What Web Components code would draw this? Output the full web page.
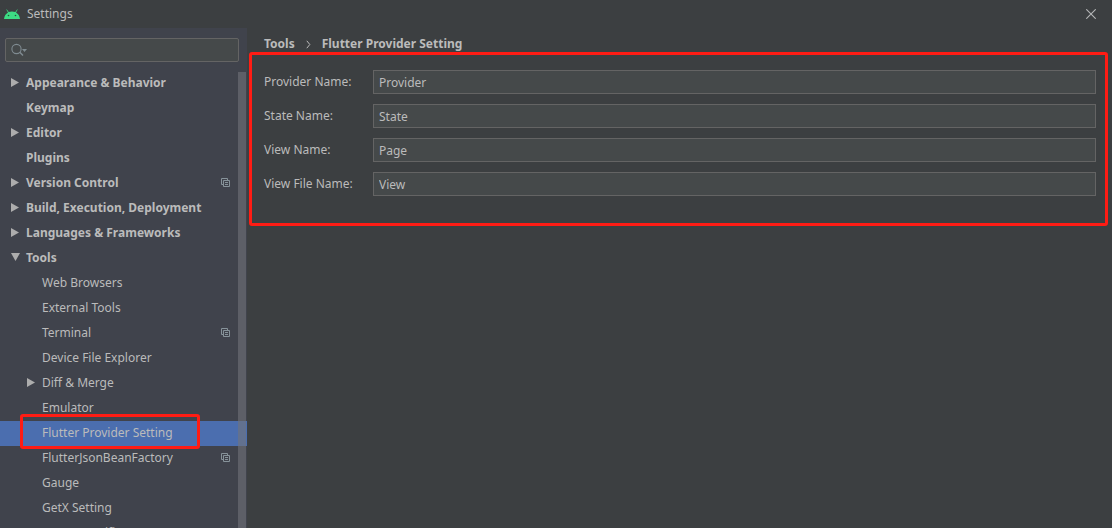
<!DOCTYPE html>
<html lang="en">
<head>
<meta charset="utf-8">
<title>Settings</title>
<style>
html, body { height: 100%; margin: 0; }
body { background: #3c3f41; color: #bbbbbb; font: 12px/24px "Noto Sans", "Open Sans", sans-serif; overflow: hidden; }
</style>
</head>
<body>
<settings-window></settings-window>
<script>
class Base extends HTMLElement {
  connectedCallback() {
    if (this.shadowRoot) return;
    this.attachShadow({ mode: 'open' }).innerHTML = this.render();
  }
}

customElements.define('title-bar', class extends Base {
  render() {
    return `<style>
      :host { display: flex; align-items: center; height: 28px; padding: 0 16px 0 4px; box-sizing: border-box; flex: none; }
      .title { flex: 1; margin: 0 0 0 7px; font: inherit; }
      button { display: flex; border: 0; padding: 0; background: none; color: #b4b6b7; }
      svg { display: block; }
    </style>
    <svg width="16" height="10" viewBox="0 0 16 10" aria-hidden="true">
      <path d="M0 10C.3 7 1.800 4.800 4 3.500L2.400.8Q2.300.2 2.900.4L4.700 3.100Q8 1.700 11.300 3.100L13.100.4Q13.700.2 13.600.8L12 3.500C14.200 4.800 15.700 7 16 10Z" fill="#3ddc84"/>
      <circle cx="4.500" cy="6.500" r=".8" fill="#24523a"/><circle cx="11.500" cy="6.500" r=".8" fill="#24523a"/>
    </svg>
    <h1 class="title">Settings</h1>
    <button type="button" aria-label="Close"><svg width="10" height="10" viewBox="0 0 10 10"><path d="M.3.3L9.700 9.700M9.700.3L.3 9.700" stroke="currentColor" stroke-width="1.100"/></svg></button>`;
  }
});

customElements.define('search-box', class extends Base {
  render() {
    return `<style>
      :host { display: flex; align-items: center; height: 24px; box-sizing: border-box; border: 1px solid #646464; border-radius: 2px; background: #45494a; padding-left: 5px; }
      input { flex: 1; min-width: 0; border: 0; outline: 0; background: none; color: inherit; font: inherit; height: 22px; padding: 0 4px; }
    </style>
    <svg width="17" height="14" viewBox="0 0 17 14" fill="none" aria-hidden="true">
      <circle cx="5.500" cy="6" r="4.600" stroke="#7f8b91" stroke-width="1.100"/><path d="M8.800 9.300L12 12.500" stroke="#7f8b91" stroke-width="1.500"/><path d="M11 6h5l-2.500 3z" fill="#7f8b91"/>
    </svg>
    <input type="text" aria-label="Search settings">`;
  }
});

customElements.define('tree-item', class extends Base {
  render() {
    const sub = this.hasAttribute('sub'), state = this.getAttribute('state');
    const arrow = state === 'open' ? '<path d="M1 1h9l-4.500 8z"/>' : state === 'closed' ? '<path d="M1 1l8 4.500-8 4.500z"/>' : '';
    return `<style>
      :host { display: flex; align-items: center; position: relative; height: 25px; box-sizing: border-box; padding: 0 17px 2px ${sub ? 26 : 10}px; font-weight: ${sub ? 400 : 700}; white-space: nowrap; }
      :host([selected]) { background: #4b6eaf; }
      .arrow { width: 11px; height: 11px; margin-right: 5px; fill: #adadad; flex: none; }
      .label { flex: 1; line-height: 23px; }
      .mark { position: absolute; left: 20px; top: -7px; width: 180px; height: 35px; box-sizing: border-box; border: 3px solid #ff1c14; border-radius: 3px; z-index: 1; }
    </style>
    <svg class="arrow" viewBox="0 0 11 11" aria-hidden="true">${arrow}</svg>
    <span class="label"><slot></slot></span>
    ${this.hasAttribute('project') ? `<svg width="9" height="9" viewBox="0 0 9 9" fill="none" stroke="#87939a" aria-label="For current project"><path d="M2 6.500H.5V.5h6V2M2.500 2.500h6v6h-6zM4 4.500h3M4 6.500h3"/></svg>` : ''}
    ${this.hasAttribute('selected') ? '<span class="mark"></span>' : ''}`;
  }
});

customElements.define('settings-sidebar', class extends Base {
  render() {
    return `<style>
      :host { display: flex; flex-direction: column; position: relative; width: 247px; flex: none; box-sizing: border-box; padding-top: 10px; background: #40434c; }
      search-box { margin: 0 8px 9px 5px; flex: none; }
      nav { flex: 1; min-height: 0; overflow: hidden; }
      .thumb { position: absolute; top: 44px; right: 1px; bottom: 0; width: 8px; background: rgba(114, 115, 122, .6); }
    </style>
    <search-box></search-box>
    <nav aria-label="Settings categories"><slot></slot></nav>
    <div class="thumb"></div>`;
  }
});

customElements.define('text-field', class extends Base {
  render() {
    return `<style>
      :host { display: flex; align-items: center; }
      label { width: 109px; flex: none; }
      input { flex: 1; min-width: 0; height: 24px; box-sizing: border-box; margin: 0; border: 1px solid #646464; border-radius: 0; outline: 0; padding: 0 5px; background: #45494a; color: inherit; font: inherit; line-height: 22px; }
    </style>
    <label for="field">${this.getAttribute('label')}</label>
    <input id="field" type="text" value="${this.getAttribute('value')}">`;
  }
});

customElements.define('crumb-trail', class extends Base {
  render() {
    return `<style>
      :host { display: flex; align-items: center; height: 24px; padding: 8px 17px 0; box-sizing: border-box; font-weight: 700; gap: 11px; line-height: 16px; }
      a { color: inherit; text-decoration: none; }
    </style>
    <a href="#tools">Tools</a>
    <svg width="5" height="9" viewBox="0 0 5 9" fill="none" stroke="#bbbbbb" aria-hidden="true"><path d="M.8.8L3.800 4.500.8 8.200"/></svg>
    <span><slot></slot></span>`;
  }
});

customElements.define('settings-form', class extends Base {
  render() {
    return `<style>
      :host { display: block; }
      form { display: grid; gap: 10px; margin: 0 4px 0 2px; padding: 15px 9px 27px 12px; border: 3px solid #ff1c14; border-radius: 3px; }
    </style><form><slot></slot></form>`;
  }
});

customElements.define('settings-window', class extends Base {
  render() {
    return `<style>
      :host { display: flex; flex-direction: column; height: 100vh; }
      .body { display: flex; flex: 1; min-height: 0; }
      main { flex: 1; min-width: 0; }
    </style>
    <title-bar></title-bar>
    <div class="body">
      <settings-sidebar>
        <tree-item state="closed">Appearance &amp; Behavior</tree-item>
        <tree-item>Keymap</tree-item>
        <tree-item state="closed">Editor</tree-item>
        <tree-item>Plugins</tree-item>
        <tree-item state="closed" project>Version Control</tree-item>
        <tree-item state="closed">Build, Execution, Deployment</tree-item>
        <tree-item state="closed">Languages &amp; Frameworks</tree-item>
        <tree-item state="open">Tools</tree-item>
        <tree-item sub>Web Browsers</tree-item>
        <tree-item sub>External Tools</tree-item>
        <tree-item sub project>Terminal</tree-item>
        <tree-item sub>Device File Explorer</tree-item>
        <tree-item sub state="closed">Diff &amp; Merge</tree-item>
        <tree-item sub>Emulator</tree-item>
        <tree-item sub selected>Flutter Provider Setting</tree-item>
        <tree-item sub project>FlutterJsonBeanFactory</tree-item>
        <tree-item sub>Gauge</tree-item>
        <tree-item sub>GetX Setting</tree-item>
        <tree-item sub>Server Certificates</tree-item>
      </settings-sidebar>
      <main>
        <crumb-trail>Flutter Provider Setting</crumb-trail>
        <settings-form>
          <text-field label="Provider Name:" value="Provider"></text-field>
          <text-field label="State Name:" value="State"></text-field>
          <text-field label="View Name:" value="Page"></text-field>
          <text-field label="View File Name:" value="View"></text-field>
        </settings-form>
      </main>
    </div>`;
  }
});
</script>
</body>
</html>
